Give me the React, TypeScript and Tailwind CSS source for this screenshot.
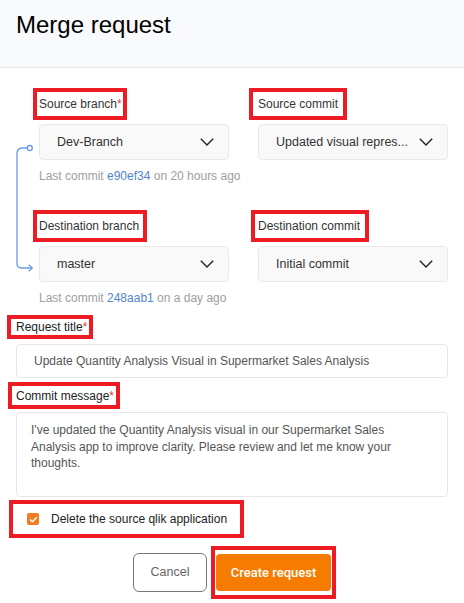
import type { ReactNode } from 'react'

const body = { fontFamily: '"Liberation Sans", Arial, sans-serif' }

function RedBox({ children, className = '' }: { children: ReactNode; className?: string }) {
  return (
    <div className={`inline-flex items-center self-start border-4 border-[#ed1c24] ${className}`}>
      {children}
    </div>
  )
}

function Req() {
  return <span className="text-[#e53935]">*</span>
}

function Chevron() {
  return (
    <svg width="14" height="8" viewBox="0 0 14 8" fill="none" className="shrink-0">
      <polyline points="0.8,0.8 7,7 13.2,0.8" stroke="#222" strokeWidth="1.4" strokeLinejoin="miter" />
    </svg>
  )
}

function Select({ value }: { value: string }) {
  return (
    <div className="mt-1 flex h-9 items-center justify-between rounded-[4px] border border-[#e9e9e9] bg-[#f9f9f9] pl-[17px] pr-[14px]">
      <span className="text-[12.5px] text-[#333]">{value}</span>
      <Chevron />
    </div>
  )
}

function LastCommit({ hash, when }: { hash: string; when: string }) {
  return (
    <p className="mt-2 whitespace-nowrap text-[12px] leading-4 text-[#9e9e9e]">
      Last commit <span className="text-[#4f86c6]">{hash}</span> on {when}
    </p>
  )
}

export default function App() {
  return (
    <div className="min-h-screen bg-white" style={body}>
      <header className="h-[68px] border-b border-[#e5e7eb] bg-[#f8fafc] pl-4 pt-[11px]">
        <h1 className="text-[24px] leading-7 text-black">Merge request</h1>
      </header>

      <div className="relative pl-[39px] pr-4 pt-5">
        <svg className="absolute left-0 top-0" width="40" height="220" viewBox="0 68 40 220" fill="none">
          <path
            d="M27.3 148 H22.5 Q17 148 17 153.5 V263.5 Q17 268 21.5 268 H32"
            stroke="#6c9be6"
            strokeWidth="1.3"
          />
          <circle cx="29.8" cy="148" r="2.5" stroke="#6c9be6" strokeWidth="1.3" fill="white" />
          <polyline points="28.8,264.6 32.2,268 28.8,271.4" stroke="#6c9be6" strokeWidth="1.3" />
        </svg>

        <div className="grid grid-cols-2 gap-x-[29px] gap-y-[26px]">
          <div className="flex flex-col">
            <RedBox className="-ml-[6px] h-8 pl-[2px] pr-[1px]">
              <span className="text-[12px] leading-4 text-[#333]">
                Source branch
                <Req />
              </span>
            </RedBox>
            <Select value="Dev-Branch" />
            <LastCommit hash="e90ef34" when="20 hours ago" />
          </div>
          <div className="flex flex-col">
            <RedBox className="-ml-[9px] h-8 px-[5px]">
              <span className="text-[12px] leading-4 text-[#333]">Source commit</span>
            </RedBox>
            <Select value="Updated visual repres..." />
          </div>
          <div className="flex flex-col">
            <RedBox className="-ml-[6px] h-8 pl-[2px] pr-[4px]">
              <span className="text-[12px] leading-4 text-[#333]">Destination branch</span>
            </RedBox>
            <Select value="master" />
            <LastCommit hash="248aab1" when="a day ago" />
          </div>
          <div className="flex flex-col">
            <RedBox className="-ml-[7px] h-8 pl-[3px] pr-[5px]">
              <span className="text-[12px] leading-4 text-[#333]">Destination commit</span>
            </RedBox>
            <Select value="Initial commit" />
          </div>
        </div>
      </div>

      <div className="flex flex-col px-4 pt-[9px]">
        <RedBox className="-ml-[9px] h-6 pl-[5px] pr-[2px]">
          <span className="text-[12px] leading-4 text-[#222]">
            Request title
            <Req />
          </span>
        </RedBox>
        <div className="mt-[5px] flex h-[34px] items-center rounded-[4px] border border-[#e6e6e6] bg-white pl-[17px]">
          <span className="text-[12px] text-[#555]">
            Update Quantity Analysis Visual in Supermarket Sales Analysis
          </span>
        </div>

        <RedBox className="-ml-[8px] mt-1 h-[27px] pl-[4px] pr-[2px]">
          <span className="text-[12px] leading-4 text-[#222]">
            Commit message
            <Req />
          </span>
        </RedBox>
        <div className="mt-[3px] h-[85px] rounded-[4px] border border-[#e6e6e6] bg-white px-[14px] pt-[9px] text-[12px] leading-[16.5px] text-[#555]">
          I've updated the Quantity Analysis visual in our Supermarket Sales
          <br />
          Analysis app to improve clarity. Please review and let me know your
          <br />
          thoughts.
        </div>

        <RedBox className="-ml-[7px] mt-[3px] h-[38px] w-[235px] pl-[14px]">
          <span className="flex h-[12px] w-[12px] items-center justify-center rounded-[2px] bg-[#f47c20]">
            <svg width="9" height="7" viewBox="0 0 9 7" fill="none">
              <polyline points="1,3.6 3.3,5.8 8,1.2" stroke="white" strokeWidth="1.4" />
            </svg>
          </span>
          <span className="ml-3 whitespace-nowrap text-[12px] leading-4 text-[#222]">
            Delete the source qlik application
          </span>
        </RedBox>

        <div className="mt-2 flex items-center justify-center gap-1 pl-[5px]">
          <button
            type="button"
            className="h-[39px] w-[74px] rounded-[6px] border border-[#777] bg-white text-[12.5px] text-[#666]"
          >
            Cancel
          </button>
          <RedBox className="px-px py-1">
            <button
              type="button"
              className="h-[37px] w-[115px] rounded-[4px] bg-[#f57c00] text-[13px] font-medium text-white"
              style={{ fontFamily: 'Roboto, "Liberation Sans", Arial, sans-serif' }}
            >
              Create request
            </button>
          </RedBox>
        </div>
      </div>
    </div>
  )
}
